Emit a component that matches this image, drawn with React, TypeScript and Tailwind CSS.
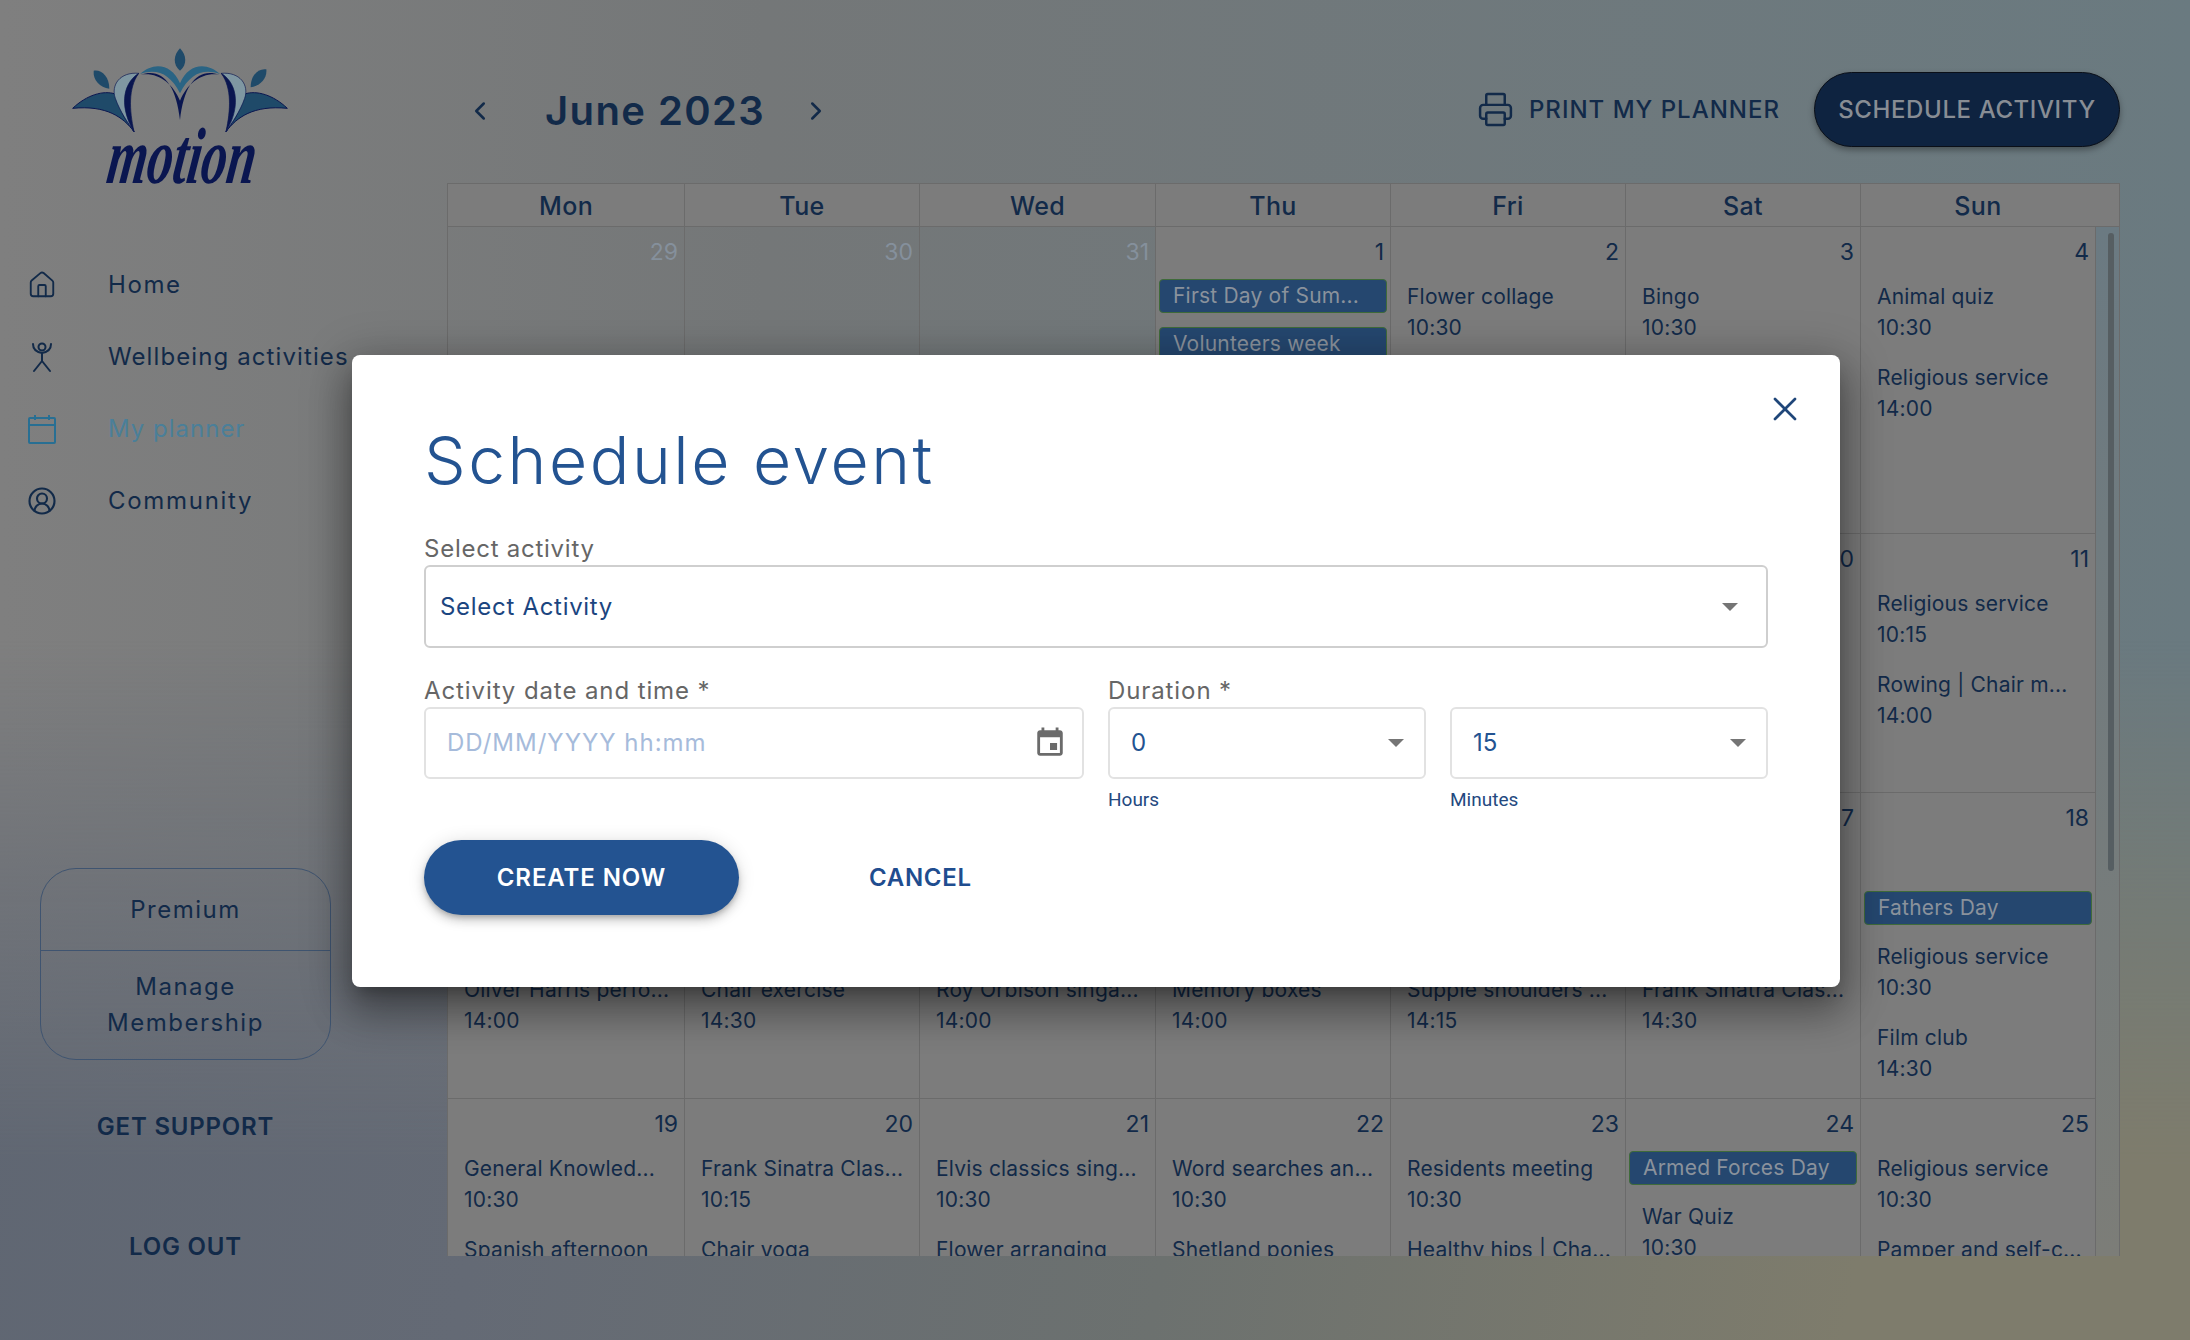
import React from 'react';
import { ChevronLeft, ChevronRight, Printer, X, House, CircleUserRound } from 'lucide-react';

type Ev = { name: string; time: string };
type Day = { n: number; muted?: boolean; chips?: string[]; chipTop?: string; top?: string; events?: Ev[] };

const weeks: Day[][] = [
  [
    { n: 29, muted: true },
    { n: 30, muted: true },
    { n: 31, muted: true },
    { n: 1, chips: ['First Day of Sum...', 'Volunteers week'] },
    { n: 2, events: [{ name: 'Flower collage', time: '10:30' }] },
    { n: 3, events: [{ name: 'Bingo', time: '10:30' }] },
    { n: 4, events: [{ name: 'Animal quiz', time: '10:30' }, { name: 'Religious service', time: '14:00' }] },
  ],
  [
    { n: 5 }, { n: 6 }, { n: 7 }, { n: 8 }, { n: 9 },
    { n: 10 },
    { n: 11, events: [{ name: 'Religious service', time: '10:15' }, { name: 'Rowing | Chair m...', time: '14:00' }] },
  ],
  [
    { n: 12, top: 'mt-[145px]', events: [{ name: 'Oliver Harris perfo...', time: '14:00' }] },
    { n: 13, top: 'mt-[145px]', events: [{ name: 'Chair exercise', time: '14:30' }] },
    { n: 14, top: 'mt-[145px]', events: [{ name: 'Roy Orbison singa...', time: '14:00' }] },
    { n: 15, top: 'mt-[145px]', events: [{ name: 'Memory boxes', time: '14:00' }] },
    { n: 16, top: 'mt-[145px]', events: [{ name: 'Supple shoulders ...', time: '14:15' }] },
    { n: 17, top: 'mt-[145px]', events: [{ name: 'Frank Sinatra Clas...', time: '14:30' }] },
    { n: 18, chips: ['Fathers Day'], chipTop: 'mt-[62px]', events: [{ name: 'Religious service', time: '10:30' }, { name: 'Film club', time: '14:30' }] },
  ],
  [
    { n: 19, events: [{ name: 'General Knowled...', time: '10:30' }, { name: 'Spanish afternoon', time: '14:00' }] },
    { n: 20, events: [{ name: 'Frank Sinatra Clas...', time: '10:15' }, { name: 'Chair yoga', time: '14:00' }] },
    { n: 21, events: [{ name: 'Elvis classics sing...', time: '10:30' }, { name: 'Flower arranging', time: '14:00' }] },
    { n: 22, events: [{ name: 'Word searches an...', time: '10:30' }, { name: 'Shetland ponies', time: '14:00' }] },
    { n: 23, events: [{ name: 'Residents meeting', time: '10:30' }, { name: 'Healthy hips | Cha...', time: '14:00' }] },
    { n: 24, chips: ['Armed Forces Day'], events: [{ name: 'War Quiz', time: '10:30' }] },
    { n: 25, events: [{ name: 'Religious service', time: '10:30' }, { name: 'Pamper and self-c...', time: '14:00' }] },
  ],
];

const Logo = () => (
  <svg viewBox="0 0 780 510" className="w-[260px] h-[170px]">
    <path d="M390 55C410 75 412 105 390 122C368 105 370 75 390 55Z" fill="#1f4a69" />
    <path d="M131 122C155 118 178 140 178 176C150 172 128 150 131 122Z" fill="#1f4a69" />
    <path d="M649 118C625 114 602 136 602 172C630 168 652 146 649 118Z" fill="#1f4a69" />
    <path d="M68 235C110 195 160 180 196 192C205 240 235 280 252 305C220 262 170 225 68 235Z" fill="#1f4a69" stroke="#0a1650" strokeWidth="3" />
    <path d="M712 235C670 195 620 180 584 192C575 240 545 280 528 305C560 262 610 225 712 235Z" fill="#1f4a69" stroke="#0a1650" strokeWidth="3" />
    <path d="M266 130C210 125 182 165 196 205C210 245 235 280 252 305C235 250 215 190 266 130Z" fill="#7f97a2" stroke="#0a1650" strokeWidth="2" />
    <path d="M514 130C570 125 598 165 584 205C570 245 545 280 528 305C545 250 565 190 514 130Z" fill="#7f97a2" stroke="#0a1650" strokeWidth="2" />
    <path d="M266 130C212 165 212 240 252 305C238 240 234 175 266 130Z" fill="#0a1650" stroke="#0a1650" strokeWidth="2" />
    <path d="M514 130C568 165 568 240 528 305C542 240 546 175 514 130Z" fill="#0a1650" stroke="#0a1650" strokeWidth="2" />
    <path d="M270 132C310 95 365 100 390 160C415 100 470 95 510 132C460 115 420 130 390 190C360 130 320 115 270 132Z" fill="#2a6484" />
    <path d="M272 134C335 112 378 160 390 270C402 160 445 112 508 134C455 126 412 160 390 212C368 160 325 126 272 134Z" fill="#0a1650" />
    <text transform="translate(165 458) skewX(-8) scale(0.64 1)" fontFamily="'Liberation Serif', serif" fontStyle="italic" fontWeight="700" fontSize="240" fill="#0a1650">motion</text>
  </svg>
);

const PersonIcon = () => (
  <svg viewBox="0 0 30 32" className="w-[30px] h-[32px]" fill="none" stroke="#122a49" strokeWidth="2" strokeLinecap="round" strokeLinejoin="round">
    <circle cx="15" cy="6" r="3.5" />
    <path d="M6 3c0 5 3 8 9 9c6-1 9-4 9-9" />
    <path d="M15 12v8M15 20l-8 10M15 20l8 10" />
  </svg>
);

const PlannerIcon = () => (
  <svg viewBox="0 0 30 30" className="w-[30px] h-[30px]" fill="none" stroke="#286f93" strokeWidth="2">
    <rect x="2" y="4" width="26" height="25" rx="1" />
    <path d="M2 11h26M8 1v5M22 1v5" />
  </svg>
);

const Caret = () => (
  <svg viewBox="0 0 16 8" className="w-4 h-2" fill="#757575"><path d="M0 0h16L8 8z" /></svg>
);

const navItems = [
  { label: 'Home', icon: <House size={38} strokeWidth={1.5} color="#122a49" />, cls: 'tracking-[1.6px] text-[#122a49]' },
  { label: 'Wellbeing activities', icon: <PersonIcon />, cls: 'tracking-[1.1px] text-[#122a49]' },
  { label: 'My planner', icon: <PlannerIcon />, cls: 'tracking-[1px] text-[#4a7f99]' },
  { label: 'Community', icon: <CircleUserRound size={34} strokeWidth={1.7} color="#122a49" />, cls: 'tracking-[1.7px] text-[#122a49]' },
];

const Cell = ({ day }: { day: Day }) => (
  <div className={`border-r border-b border-[#6b6b6b] overflow-hidden ${day.muted ? '' : 'bg-[#7c7c7c]'}`}>
    <div className={`h-[36px] pt-[12px] pr-[6px] text-right text-[23px] leading-[26px] ${day.muted ? 'text-[#85909c]' : 'text-[#122a49]'}`}>{day.n}</div>
    {day.chips && (
      <div className={`mx-[3px] ${day.chipTop ?? 'mt-[16px]'} flex flex-col gap-[14px]`}>
        {day.chips.map((c) => (
          <div key={c} className="h-[34px] rounded-[4px] border border-[#3f6b3a] bg-[#25476f] pl-[13px] text-[21px] tracking-[0.2px] leading-[31px] text-[#8a929c] whitespace-nowrap overflow-hidden">{c}</div>
        ))}
      </div>
    )}
    <div className={`${day.top ?? (day.chips ? 'mt-[16px]' : 'mt-[18px]')} px-[16px] flex flex-col gap-[19px]`}>
      {(day.events ?? []).map((e) => (
        <div key={e.name} className="text-[21px] tracking-[0.2px] leading-[31px] text-[#122a49] whitespace-nowrap">
          <div>{e.name}</div>
          <div>{e.time}</div>
        </div>
      ))}
    </div>
  </div>
);

const SelectBox = ({ value, className }: { value: string; className: string }) => (
  <div className={`flex items-center justify-between rounded-[6px] border-2 border-[#e2e2e2] h-[72px] pl-[21px] pr-[20px] text-[24px] text-[#235391] ${className}`}>
    <span>{value}</span>
    <Caret />
  </div>
);

export default function App() {
  return (
    <div className="relative w-[2190px] h-[1340px] overflow-hidden flex font-['Inter','Liberation_Sans',sans-serif] bg-[linear-gradient(90deg,#7f7f7f_0%,#747778_35%,#6a7a80_100%)]">
      <div className="absolute inset-x-0 bottom-0 h-[700px] bg-[linear-gradient(100deg,#5f6672_0%,#646a75_25%,#6c716f_55%,#7e7c6c_85%,#7e7c6c_100%)] [mask-image:linear-gradient(to_bottom,transparent,black_75%)]" />

      {/* sidebar */}
      <aside className="relative w-[447px] shrink-0 flex flex-col">
        <div className="pl-[50px] pt-[30px]"><Logo /></div>
        <nav className="mt-[49px] flex flex-col">
          {navItems.map((item) => (
            <div key={item.label} className={`flex items-center h-[72px] text-[24px] ${item.cls}`}>
              <div className="w-[30px] ml-[27px] flex justify-center">{item.icon}</div>
              <span className="ml-[51px] whitespace-nowrap">{item.label}</span>
            </div>
          ))}
        </nav>
        <div className="mt-[331px] ml-[40px] w-[291px] h-[192px] rounded-[36px] border border-[#3f5470] flex flex-col text-[24px] text-[#122a49] tracking-[1.5px] text-center">
          <div className="h-[82px] flex items-center justify-center border-b border-[#3f5470]">Premium</div>
          <div className="flex-1 flex items-center justify-center leading-[36px] px-6">Manage Membership</div>
        </div>
        <div className="mt-[50px] ml-[40px] w-[291px] text-center text-[24px] font-semibold tracking-[0.8px] text-[#122a49] leading-[34px]">GET SUPPORT</div>
        <div className="mt-[86px] ml-[40px] w-[291px] text-center text-[24px] font-semibold tracking-[0.8px] text-[#122a49] leading-[34px]">LOG OUT</div>
      </aside>

      {/* planner */}
      <main className="relative flex-1 pr-[72px] flex flex-col">
        <header className="h-[183px] flex items-start">
          <div className="mt-[73px] h-[75px] flex items-center text-[#122a49]">
            <ChevronLeft size={30} strokeWidth={2} className="ml-[18px]" />
            <span className="ml-[50px] text-[40px] font-semibold tracking-[1.4px] leading-none whitespace-nowrap w-[220px]">June 2023</span>
            <ChevronRight size={30} strokeWidth={2} className="ml-[36px]" />
          </div>
          <div className="ml-auto mt-[72px] flex items-center">
            <Printer size={37} strokeWidth={1.6} color="#122a49" />
            <span className="ml-[15px] text-[24px] font-medium tracking-[1px] text-[#122a49] whitespace-nowrap">PRINT MY PLANNER</span>
            <button className="ml-[34px] w-[306px] h-[75px] rounded-full bg-[#0e2340] border border-[#0a0f18] text-[24px] font-medium tracking-[0.6px] text-[#888d94] shadow-[0_3px_6px_rgba(0,0,0,0.35)] whitespace-nowrap">SCHEDULE ACTIVITY</button>
          </div>
        </header>

        <div className="border-r border-[#6b6b6b] h-[1073px] flex flex-col">
          <div className="grid grid-cols-[237px_235px_236px_235px_235px_235px_258px] h-[44px] border-t border-b border-l border-[#6b6b6b] bg-[#7c7c7c] text-[25px] font-medium tracking-[0.4px] text-[#122a49] text-center">
            {['Mon', 'Tue', 'Wed', 'Thu', 'Fri', 'Sat', 'Sun'].map((d, i) => (
              <div key={d} className={`leading-[45px] ${i < 6 ? 'border-r border-[#6b6b6b]' : ''}`}><span className={i === 6 ? 'pr-[24px]' : ''}>{d}</span></div>
            ))}
          </div>
          <div className="flex-1 flex min-h-0 overflow-hidden border-l border-[#6b6b6b]">
            <div className="w-[1648px] grid grid-cols-[237px_235px_236px_235px_235px_235px_235px] grid-rows-[307px_259px_306px_300px] shrink-0">
              {weeks.flat().map((day) => <Cell key={day.n + (day.muted ? 'm' : '')} day={day} />)}
            </div>
            <div className="flex-1 bg-[linear-gradient(to_bottom,#6b7a82,#7c7d78)] pt-[6px] flex justify-end pr-[5px]">
              <div className="w-[6px] h-[638px] rounded-full bg-[#565e62]" />
            </div>
          </div>
        </div>
      </main>

      {/* dialog */}
      <div className="absolute inset-0 pl-[2px] pt-[2px] flex items-center justify-center">
        <div className="relative w-[1488px] h-[632px] rounded-[8px] bg-white px-[72px] pt-[65px] shadow-[0_11px_15px_-7px_rgba(0,0,0,0.25),0_24px_38px_3px_rgba(0,0,0,0.25),0_9px_46px_8px_rgba(0,0,0,0.22)]">
          <X size={40} strokeWidth={1.6} color="#1f4679" className="absolute right-[35px] top-[34px]" />
          <h1 className="text-[66px] font-light tracking-[2.5px] leading-[80px] text-[#235391] whitespace-nowrap">Schedule event</h1>

          <div className="mt-[33px] text-[24px] tracking-[0.75px] leading-[32px] text-[#666666]">Select activity</div>
          <div className="flex items-center justify-between h-[83px] rounded-[6px] border-2 border-[#cfcfcf] pl-[14px] pr-[28px] text-[24px] tracking-[0.7px] text-[#1b4580]">
            <span>Select Activity</span>
            <Caret />
          </div>

          <div className="mt-[26px] flex">
            <div className="w-[660px]">
              <div className="text-[24px] tracking-[0.9px] leading-[33px] text-[#666666]">Activity date and time *</div>
              <div className="flex items-center justify-between h-[72px] rounded-[6px] border-2 border-[#e2e2e2] pl-[21px] pr-[15px] text-[24px] tracking-[1px] text-[#a6bbdb]">
                <span>DD/MM/YYYY hh:mm</span>
                <svg viewBox="0 0 24 24" className="w-[34px] h-[34px]" fill="#6b6b6b"><path d="M17 12h-5v5h5v-5zM16 1v2H8V1H6v2H5c-1.11 0-1.99.9-1.99 2L3 19c0 1.1.89 2 2 2h14c1.1 0 2-.9 2-2V5c0-1.1-.9-2-2-2h-1V1h-2zm3 18H5V8h14v11z" /></svg>
              </div>
            </div>
            <div className="ml-[24px] w-[660px]">
              <div className="text-[24px] tracking-[0.9px] leading-[33px] text-[#666666]">Duration *</div>
              <div className="flex gap-[24px]">
                <div className="w-[318px]">
                  <SelectBox value="0" className="w-full" />
                  <div className="mt-[11px] font-['Roboto',sans-serif] text-[19px] leading-[20px] text-[#24497f]">Hours</div>
                </div>
                <div className="w-[318px]">
                  <SelectBox value="15" className="w-full" />
                  <div className="mt-[11px] font-['Roboto',sans-serif] text-[19px] leading-[20px] text-[#24497f]">Minutes</div>
                </div>
              </div>
            </div>
          </div>

          <div className="mt-[30px] flex items-center">
            <button className="w-[315px] h-[75px] rounded-full bg-[#235391] text-[24px] font-semibold tracking-[0.9px] text-white shadow-[0_3px_5px_-1px_rgba(0,0,0,0.2),0_6px_10px_0_rgba(0,0,0,0.14),0_1px_18px_0_rgba(0,0,0,0.12)]">CREATE NOW</button>
            <button className="ml-[130px] text-[24px] font-semibold tracking-[0.7px] text-[#1f4d8f]">CANCEL</button>
          </div>
        </div>
      </div>
    </div>
  );
}
